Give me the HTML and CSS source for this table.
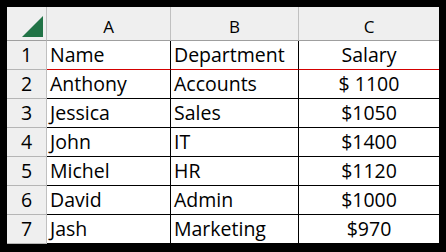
FILE: index.html
```html
<!DOCTYPE html>
<html>
<head>
<meta charset="utf-8">
<link rel="stylesheet" href="styles.css">
</head>
<body>
<div class="frame">
  <div class="sheet">
    <div class="corner"><svg width="21" height="21" viewBox="0 0 21 21"><polygon points="0,21 21,21 21,0" fill="#217346"/></svg></div>
    <div class="colhead">A</div>
    <div class="colhead">B</div>
    <div class="colhead last">C</div>

    <div class="rowhead">1</div>
    <div class="cell first">Name</div>
    <div class="cell first">Department</div>
    <div class="cell first num">Salary</div>

    <div class="rowhead">2</div>
    <div class="cell">Anthony</div>
    <div class="cell">Accounts</div>
    <div class="cell num">$ 1100</div>

    <div class="rowhead">3</div>
    <div class="cell">Jessica</div>
    <div class="cell">Sales</div>
    <div class="cell num">$1050</div>

    <div class="rowhead">4</div>
    <div class="cell">John</div>
    <div class="cell">IT</div>
    <div class="cell num">$1400</div>

    <div class="rowhead">5</div>
    <div class="cell">Michel</div>
    <div class="cell">HR</div>
    <div class="cell num">$1120</div>

    <div class="rowhead">6</div>
    <div class="cell">David</div>
    <div class="cell">Admin</div>
    <div class="cell num">$1000</div>

    <div class="rowhead">7</div>
    <div class="cell">Jash</div>
    <div class="cell">Marketing</div>
    <div class="cell num">$970</div>
  </div>
</div>
</body>
</html>
```

FILE: styles.css
```css
* { box-sizing: border-box; }
html, body { margin: 0; padding: 0; background: #000; }
body { width: 446px; height: 252px; overflow: hidden; }
.frame { padding: 7px 7px 0 7px; }
.sheet {
  display: grid;
  grid-template-columns: 40px 124px 128px 140px;
  grid-template-rows: 34px repeat(7, 29px);
  background: #fff;
  font-family: "Open Sans", sans-serif;
  color: #000;
}
.corner {
  background: #efefef;
  border-right: 1px solid #c0c0c0;
  border-bottom: 1px solid #9f9f9f;
  display: flex;
  justify-content: flex-end;
  align-items: flex-end;
  padding: 0 3px 3px 0;
}
.corner svg { display: block; }
.colhead {
  background: #efefef;
  border-right: 1px solid #c0c0c0;
  border-bottom: 1px solid #9f9f9f;
  text-align: center;
  font-size: 17px;
  line-height: 24px;
  padding-top: 8px;
}
.colhead.last { border-right: none; }
.rowhead {
  background: #efefef;
  border-right: 1px solid #c0c0c0;
  border-bottom: 1px solid #b5b5b5;
  text-align: center;
  font-size: 19.5px;
  line-height: 28px;
}
.cell {
  border-right: 1px solid #000;
  border-bottom: 1px solid #000;
  font-size: 19.5px;
  line-height: 28px;
  padding-left: 3px;
  white-space: nowrap;
}
.cell.num { border-right: none; text-align: center; padding-left: 0; }
.cell.first { border-bottom-color: #d40000; }
```
